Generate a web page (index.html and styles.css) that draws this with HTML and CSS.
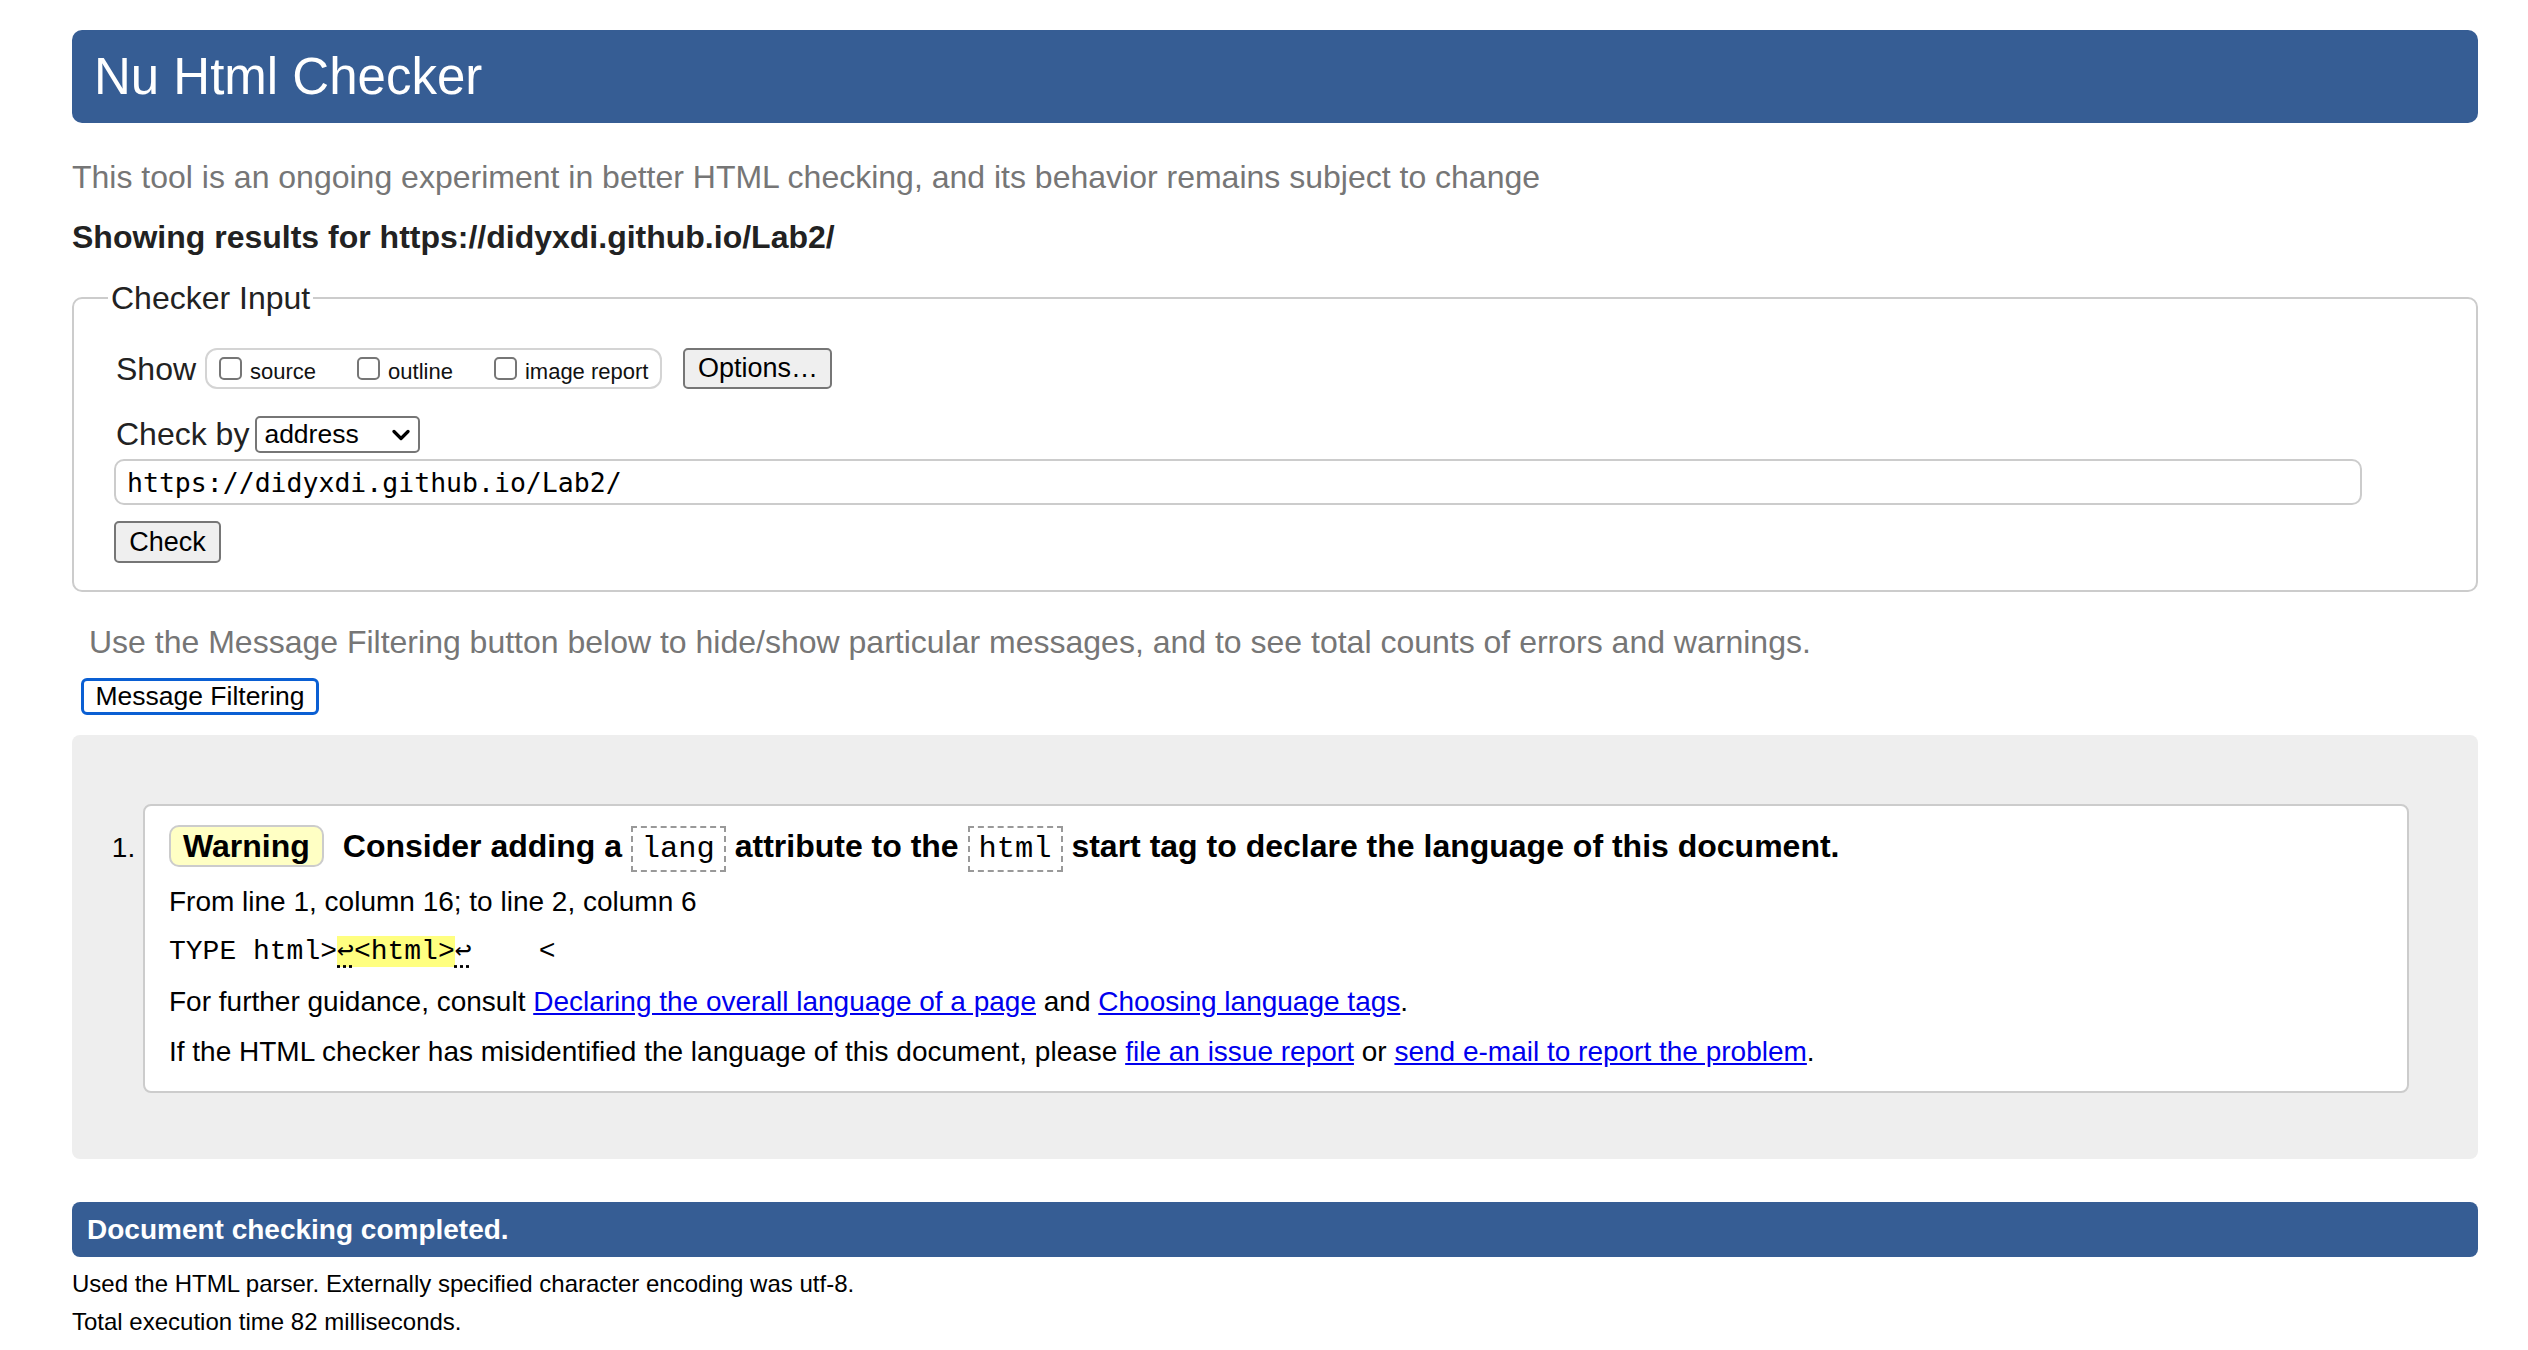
FILE: index.html
```html
<!DOCTYPE html>
<html lang="en">
<head>
<meta charset="utf-8">
<title>Nu Html Checker</title>
<link rel="stylesheet" href="styles.css">
</head>
<body>
<div class="page">
  <h1 class="banner">Nu Html Checker</h1>
  <p class="intro">This tool is an ongoing experiment in better HTML checking, and its behavior remains subject to change</p>
  <h2 class="results">Showing results for https://didyxdi.github.io/Lab2/</h2>

  <fieldset class="checker">
    <legend>Checker Input</legend>
    <div class="show-row">
      <span class="row-label">Show</span>
      <div class="opts">
        <label class="opt"><span class="cb"></span>source</label>
        <label class="opt"><span class="cb"></span>outline</label>
        <label class="opt"><span class="cb"></span>image report</label>
      </div>
      <button class="btn btn-options" type="button">Options…</button>
    </div>
    <div class="checkby-row">
      <span class="row-label checkby">Check by</span>
      <span class="select-wrap">
        <select class="sel"><option>address</option></select>
        <svg class="chev" width="18" height="12" viewBox="0 0 18 12"><path d="M2 2.5 L9 9.5 L16 2.5" fill="none" stroke="#000" stroke-width="3.2" stroke-linecap="round" stroke-linejoin="round"/></svg>
      </span>
    </div>
    <input class="url" type="text" value="https://didyxdi.github.io/Lab2/">
    <div class="check-row"><button class="btn btn-check" type="button">Check</button></div>
  </fieldset>

  <p class="filter-note">Use the Message Filtering button below to hide/show particular messages, and to see total counts of errors and warnings.</p>
  <button class="btn-filter" type="button">Message Filtering</button>

  <div class="results-area">
    <ol class="messages">
      <li class="msg">
        <p class="msg-head"><strong class="badge">Warning</strong>Consider adding a <code>lang</code> attribute to the <code>html</code> start tag to declare the language of this document.</p>
        <p class="loc">From line 1, column 16; to line 2, column 6</p>
        <p class="extract">TYPE html&gt;<span class="hl"><span class="lf">↩</span>&lt;html&gt;</span><span class="lf">↩</span>    &lt;</p>
        <p class="line">For further guidance, consult <a href="#">Declaring the overall language of a page</a> and <a href="#">Choosing language tags</a>.</p>
        <p class="line">If the HTML checker has misidentified the language of this document, please <a href="#">file an issue report</a> or <a href="#">send e-mail to report the problem</a>.</p>
      </li>
    </ol>
  </div>

  <h2 class="done">Document checking completed.</h2>
  <p class="stats">Used the HTML parser. Externally specified character encoding was utf-8.</p>
  <p class="stats stats-2">Total execution time 82 milliseconds.</p>
</div>
</body>
</html>
```

FILE: styles.css
```css
html, body {
  margin: 0;
  padding: 0;
  background: #fff;
}

body {
  font-family: "Liberation Sans", Arial, Helvetica, sans-serif;
  color: #000;
}

.page {
  padding: 30px 50px 20px 72px;
}

.banner {
  margin: 0;
  height: 93px;
  line-height: 93px;
  padding: 0 22px;
  font-size: 51px;
  font-weight: normal;
  color: #fff;
  background: #365d94;
  border-radius: 10px;
}

.intro {
  margin: 34px 0 0;
  font-size: 32px;
  line-height: 40px;
  color: #767676;
}

.results {
  margin: 20px 0 0;
  font-size: 32px;
  line-height: 40px;
  font-weight: bold;
  color: #222;
}

.checker {
  margin: 21px 0 0;
  padding: 0 40px 27px 40px;
  border: 2px solid #cccccc;
  border-radius: 10px;
  min-width: 0;
}

.checker legend {
  font-size: 32px;
  line-height: 40px;
  padding: 0 3px;
  margin-left: -6px;
  color: #222;
}

.row-label {
  font-size: 32px;
  line-height: 40px;
  color: #222;
}

.show-row {
  display: flex;
  align-items: center;
  margin-top: 30px;
  height: 41px;
}

.show-row .row-label {
  margin-left: 2px;
  margin-right: 9px;
}

.opts {
  display: flex;
  align-items: center;
  box-sizing: border-box;
  height: 41px;
  padding: 0 12px 0 12px;
  border: 2px solid #d4d4d4;
  border-radius: 12px;
}

.opt {
  font-size: 22px;
  line-height: 26px;
  padding-top: 4px;
  color: #111;
}

.opt + .opt {
  margin-left: 41px;
}

.cb {
  display: inline-block;
  box-sizing: border-box;
  width: 23px;
  height: 23px;
  margin-right: 8px;
  vertical-align: baseline;
  border: 2px solid #767676;
  border-radius: 5px;
  background: #fff;
  position: relative;
  top: 1px;
}

.btn {
  box-sizing: border-box;
  font-family: "Liberation Sans", Arial, Helvetica, sans-serif;
  font-size: 27px;
  color: #000;
  background: #efefef;
  border: 2px solid #767676;
  border-radius: 5px;
  padding: 0;
}

.btn-options {
  margin-left: 21px;
  width: 149px;
  height: 41px;
}

.checkby-row {
  display: flex;
  align-items: center;
  margin-top: 25px;
  height: 40px;
}

.checkby {
  margin-left: 2px;
  margin-right: 6px;
}

.select-wrap {
  position: relative;
  display: inline-block;
}

.sel {
  appearance: none;
  -webkit-appearance: none;
  box-sizing: border-box;
  width: 165px;
  height: 37px;
  padding: 0 0 0 7px;
  font-family: "Liberation Sans", Arial, Helvetica, sans-serif;
  font-size: 26.5px;
  color: #000;
  background: #fff;
  border: 2px solid #767676;
  border-radius: 5px;
  display: block;
}

.chev {
  position: absolute;
  right: 10px;
  top: 13px;
  pointer-events: none;
}

.url {
  display: block;
  box-sizing: border-box;
  margin-top: 5px;
  width: calc(100% - 74px);
  height: 46px;
  padding: 0 11px;
  font-family: "DejaVu Sans Mono", "Liberation Mono", monospace;
  font-size: 26.5px;
  color: #000;
  background: #fff;
  border: 2px solid #cccccc;
  border-radius: 10px;
}

.check-row {
  margin-top: 16px;
  height: 42px;
}

.btn-check {
  width: 107px;
  height: 42px;
}

.filter-note {
  margin: 30px 0 0 17px;
  font-size: 32px;
  line-height: 40px;
  color: #767676;
}

.btn-filter {
  display: block;
  box-sizing: border-box;
  margin: 16px 0 0 9px;
  width: 238px;
  height: 37px;
  padding: 0;
  font-family: "Liberation Sans", Arial, Helvetica, sans-serif;
  font-size: 26.5px;
  color: #000;
  background: #fff;
  border: 3px solid #0a5fd3;
  border-radius: 6px;
}

.results-area {
  margin-top: 20px;
  background: #eeeeee;
  border-radius: 8px;
  padding: 69px 69px 66px 71px;
}

.messages {
  margin: 0;
  padding: 0;
  list-style: decimal outside;
  font-size: 28px;
}

.msg {
  background: #fff;
  border: 2px solid #cccccc;
  border-radius: 8px;
  padding: 19px 24px 14px 24px;
}

.msg p {
  margin: 0;
}

.msg-head {
  font-size: 32px;
  font-weight: bold;
  line-height: 42px;
  margin-bottom: 7px !important;
}

.badge {
  display: inline-block;
  box-sizing: border-box;
  height: 42px;
  line-height: 38px;
  padding: 0 12px;
  margin-right: 19px;
  background: #ffffc4;
  border: 2px solid #cccccc;
  border-radius: 10px;
  vertical-align: top;
}

.msg-head code {
  font-family: "Liberation Mono", "DejaVu Sans Mono", monospace;
  font-size: 30.4px;
  font-weight: normal;
  padding: 4px 9px;
  border: 2px dashed #999999;
}

.loc,
.line,
.extract {
  font-size: 28px;
  line-height: 50px;
}

.extract {
  font-family: "Liberation Mono", "DejaVu Sans Mono", monospace;
  white-space: pre;
}

.hl {
  background: #ffff80;
}

.lf {
  text-decoration: underline dotted #000;
  text-underline-offset: 6px;
}

.msg a {
  color: #0000ee;
  text-decoration: underline;
}

.done {
  margin: 43px 0 0;
  height: 55px;
  line-height: 55px;
  padding-left: 15px;
  font-size: 28px;
  font-weight: bold;
  color: #fff;
  background: #365d94;
  border-radius: 8px;
}

.stats {
  margin: 12px 0 0;
  font-size: 24px;
  line-height: 30px;
}

.stats-2 {
  margin-top: 8px;
}
```
